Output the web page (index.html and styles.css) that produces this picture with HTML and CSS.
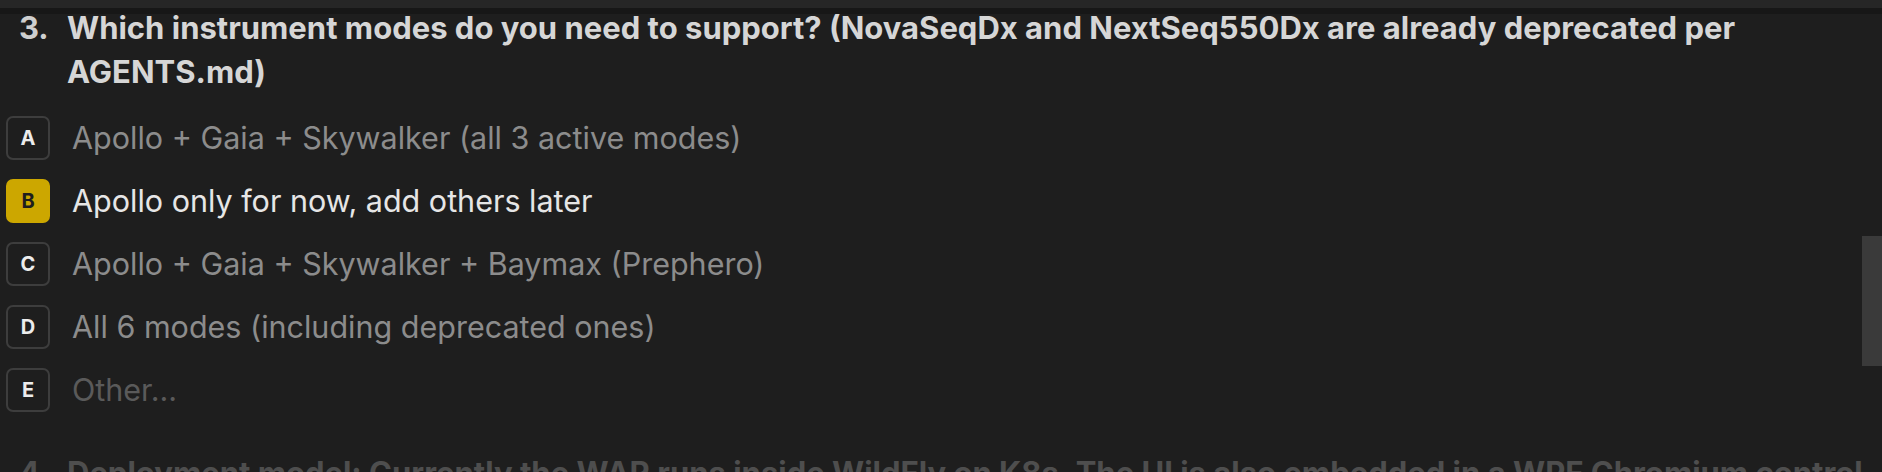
FILE: index.html
```html
<!DOCTYPE html>
<html lang="en">
<head>
<meta charset="utf-8">
<title>Questions</title>
<link rel="stylesheet" href="styles.css">
</head>
<body>
<div class="topbar"><div class="topbar-fill"></div><div class="topbar-shadow"></div></div>
<main class="content">
  <section class="question">
    <div class="q-title">
      <span class="q-num">3.</span>
      <span class="q-text">Which instrument modes do you need to support? (NovaSeqDx and NextSeq550Dx are already deprecated per AGENTS.md)</span>
    </div>
    <ul class="options">
      <li class="option"><span class="key">A</span><span class="label">Apollo + Gaia + Skywalker (all 3 active modes)</span></li>
      <li class="option selected"><span class="key">B</span><span class="label">Apollo only for now, add others later</span></li>
      <li class="option"><span class="key">C</span><span class="label">Apollo + Gaia + Skywalker + Baymax (Prephero)</span></li>
      <li class="option"><span class="key">D</span><span class="label">All 6 modes (including deprecated ones)</span></li>
      <li class="option other"><span class="key">E</span><span class="label">Other...</span></li>
    </ul>
  </section>
  <section class="question dim">
    <div class="q-title">
      <span class="q-num">4.</span>
      <span class="q-text">Deployment model: Currently the WAR runs inside WildFly on K8s. The UI is also embedded in a WPF Chromium control</span>
    </div>
  </section>
</main>
<div class="scrollbar"></div>
</body>
</html>
```
FILE: styles.css
```css
html, body {
  margin: 0;
  padding: 0;
  background: #1e1e1e;
  height: 472px;
  overflow: hidden;
}
body {
  font-family: Inter, "Noto Sans", "Liberation Sans", sans-serif;
  color: #d6d6d6;
  position: relative;
}
.topbar {
  position: absolute;
  top: 0;
  left: 0;
  right: 0;
  z-index: 2;
}
.topbar-fill {
  height: 8px;
  background: #262626;
}
.topbar-shadow {
  height: 6px;
  background: #171717;
}
.content {
  padding-top: 6px;
}
.question {
  margin-bottom: 30px;
}
.q-title {
  display: flex;
  font-size: 31px;
  font-weight: 700;
  line-height: 44px;
  color: #d6d6d6;
  padding-left: 19px;
  padding-right: 0;
}
.q-num {
  flex: 0 0 48px;
  color: #cfcfcf;
}
.options {
  list-style: none;
  margin: 12px 0 0 0;
  padding: 0;
  display: flex;
  flex-direction: column;
}
.option {
  height: 63px;
  display: flex;
  align-items: center;
  gap: 22px;
  padding-left: 6px;
}
.key {
  width: 44px;
  height: 44px;
  box-sizing: border-box;
  border: 2px solid #3d3d3d;
  border-radius: 7px;
  display: flex;
  align-items: center;
  justify-content: center;
  font-size: 20px;
  font-weight: 700;
  color: #ececec;
}
.label {
  font-size: 30.5px;
  color: #8c8c8c;
  white-space: nowrap;
}
.selected .key {
  background: #cca700;
  border-color: #cca700;
  color: #1e1e1e;
}
.selected .label {
  color: #e6e6e6;
}
.other .label {
  color: #5a5a5a;
}
.dim .q-title,
.dim .q-num {
  color: #4e4e4e;
}
.scrollbar {
  position: absolute;
  right: 0;
  top: 236px;
  width: 20px;
  height: 130px;
  background: #3a3a3a;
}
```
